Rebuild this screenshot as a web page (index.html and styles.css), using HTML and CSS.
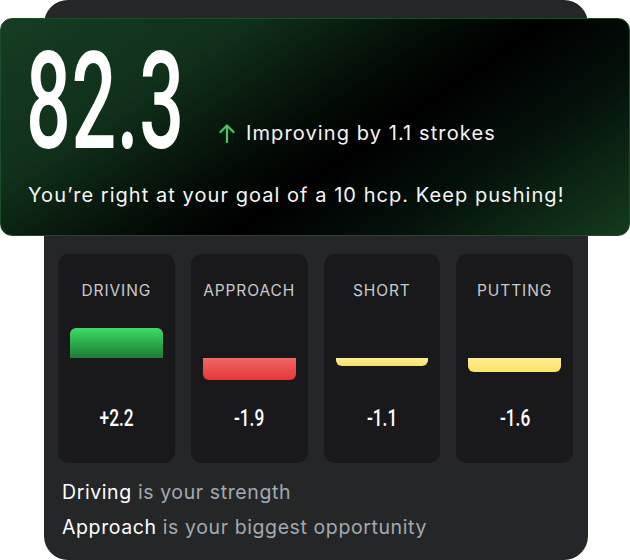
FILE: index.html
```html
<!DOCTYPE html>
<html lang="en">
<head>
<meta charset="utf-8">
<title>Handicap summary</title>
<link rel="stylesheet" href="styles.css">
</head>
<body>
<div class="stage">
  <section class="panel">
    <div class="tiles">
      <div class="tile">
        <div class="tile-label">Driving</div>
        <div class="meter">
          <div class="meter-up"><div class="bar bar-green" style="height:30px"></div></div>
          <div class="meter-down"></div>
        </div>
        <div class="tile-value"><span>+2.2</span></div>
      </div>
      <div class="tile">
        <div class="tile-label">Approach</div>
        <div class="meter">
          <div class="meter-up"></div>
          <div class="meter-down"><div class="bar bar-red" style="height:22px"></div></div>
        </div>
        <div class="tile-value"><span>-1.9</span></div>
      </div>
      <div class="tile">
        <div class="tile-label">Short</div>
        <div class="meter">
          <div class="meter-up"></div>
          <div class="meter-down"><div class="bar bar-yellow" style="height:8px"></div></div>
        </div>
        <div class="tile-value"><span>-1.1</span></div>
      </div>
      <div class="tile">
        <div class="tile-label">Putting</div>
        <div class="meter">
          <div class="meter-up"></div>
          <div class="meter-down"><div class="bar bar-yellow" style="height:14px"></div></div>
        </div>
        <div class="tile-value"><span>-1.6</span></div>
      </div>
    </div>
    <p class="insight"><strong>Driving</strong> is your strength</p>
    <p class="insight"><strong>Approach</strong> is your biggest opportunity</p>
  </section>

  <section class="hero">
    <div class="hero-top">
      <div class="score"><span>82.3</span></div>
      <div class="trend">
        <svg class="trend-icon" width="18" height="20" viewBox="0 0 18 20" aria-hidden="true">
          <path d="M9 19V2.5M2.5 9L9 2.5L15.5 9" fill="none" stroke="#4cc46a" stroke-width="2.2" stroke-linecap="round" stroke-linejoin="round"/>
        </svg>
        <span>Improving by 1.1 strokes</span>
      </div>
    </div>
    <p class="hero-note">You’re right at your goal of a 10 hcp. Keep pushing!</p>
  </section>
</div>
</body>
</html>
```
FILE: styles.css
```css
html, body {
  margin: 0;
  padding: 0;
  background: #ffffff;
}

body {
  font-family: "Inter", "DejaVu Sans", sans-serif;
}

.stage {
  width: 630px;
  height: 560px;
  display: grid;
  grid-template-columns: 630px;
  grid-template-rows: 560px;
}

.stage > * {
  grid-area: 1 / 1;
}

/* back panel with the four skill tiles */
.panel {
  justify-self: start;
  align-self: start;
  margin-left: 44px;
  width: 544px;
  height: 560px;
  box-sizing: border-box;
  padding: 254px 15px 0 14px;
  background: #252628;
  border-radius: 24px;
}

.tiles {
  display: grid;
  grid-template-columns: repeat(4, 1fr);
  gap: 16px;
}

.tile {
  height: 209px;
  box-sizing: border-box;
  padding: 27px 12px 0;
  background: #19191b;
  border-radius: 11px;
  display: flex;
  flex-direction: column;
}

.tile-label {
  height: 20px;
  line-height: 20px;
  text-align: center;
  font-size: 15.5px;
  letter-spacing: 0.9px;
  text-transform: uppercase;
  color: #c9c9cb;
  white-space: nowrap;
}

.meter {
  margin-top: 17px;
  display: grid;
  grid-template-rows: 40px 40px;
}

.meter-up {
  display: flex;
  align-items: flex-end;
}

.meter-down {
  display: flex;
  align-items: flex-start;
}

.bar {
  width: 100%;
}

.bar-green {
  border-radius: 6px 6px 0 0;
  background: linear-gradient(180deg, #3ddc64 0%, #2aa64a 55%, #217a37 100%);
}

.bar-red {
  border-radius: 0 0 6px 6px;
  background: linear-gradient(180deg, #ef6767 0%, #e83636 100%);
}

.bar-yellow {
  border-radius: 0 0 6px 6px;
  background: linear-gradient(180deg, #fdee96 0%, #fbe163 100%);
}

.tile-value {
  margin-top: 6px;
  height: 28px;
  line-height: 28px;
  display: flex;
  justify-content: center;
}

.tile-value span {
  display: inline-block;
  font-family: "Roboto", "Liberation Sans", sans-serif;
  font-weight: 500;
  font-size: 24px;
  color: #ffffff;
  transform: scaleX(0.72);
}

.insight {
  margin: 0;
  padding-left: 4px;
  font-size: 19.5px;
  letter-spacing: 0.6px;
  line-height: 35px;
  color: #a3a9b0;
}

.insight:first-of-type {
  margin-top: 12px;
}

.insight strong {
  font-weight: 400;
  color: #ffffff;
}

/* green score card laid over the panel */
.hero {
  align-self: start;
  margin-top: 18px;
  height: 218px;
  box-sizing: border-box;
  border: 1px solid #1d4c28;
  border-radius: 12px;
  padding: 0 27px;
  background: linear-gradient(146deg, #163d22 0%, #10301a 26%, #030b05 48%, #000000 58%, #04100a 74%, #143b1c 100%);
  color: #ffffff;
}

.hero-top {
  display: flex;
  align-items: flex-end;
  height: 130px;
}

.score {
  width: 192px;
  height: 108px;
  margin-left: -2px;
  overflow: visible;
}

.score span {
  display: inline-block;
  font-family: "Roboto", "Liberation Sans", sans-serif;
  font-weight: 500;
  font-size: 136px;
  line-height: 122px;
  letter-spacing: 1px;
  transform: scaleX(0.58);
  transform-origin: left center;
  white-space: nowrap;
}

.trend {
  display: flex;
  align-items: center;
  gap: 10px;
  margin-bottom: 4px;
  font-size: 20px;
  letter-spacing: 1.1px;
  color: #f4f4f4;
}

.trend-icon {
  display: block;
}

.hero-note {
  margin: 34px 0 0;
  font-size: 20px;
  letter-spacing: 1.05px;
  line-height: 24px;
  color: #f6f6f6;
}
```
